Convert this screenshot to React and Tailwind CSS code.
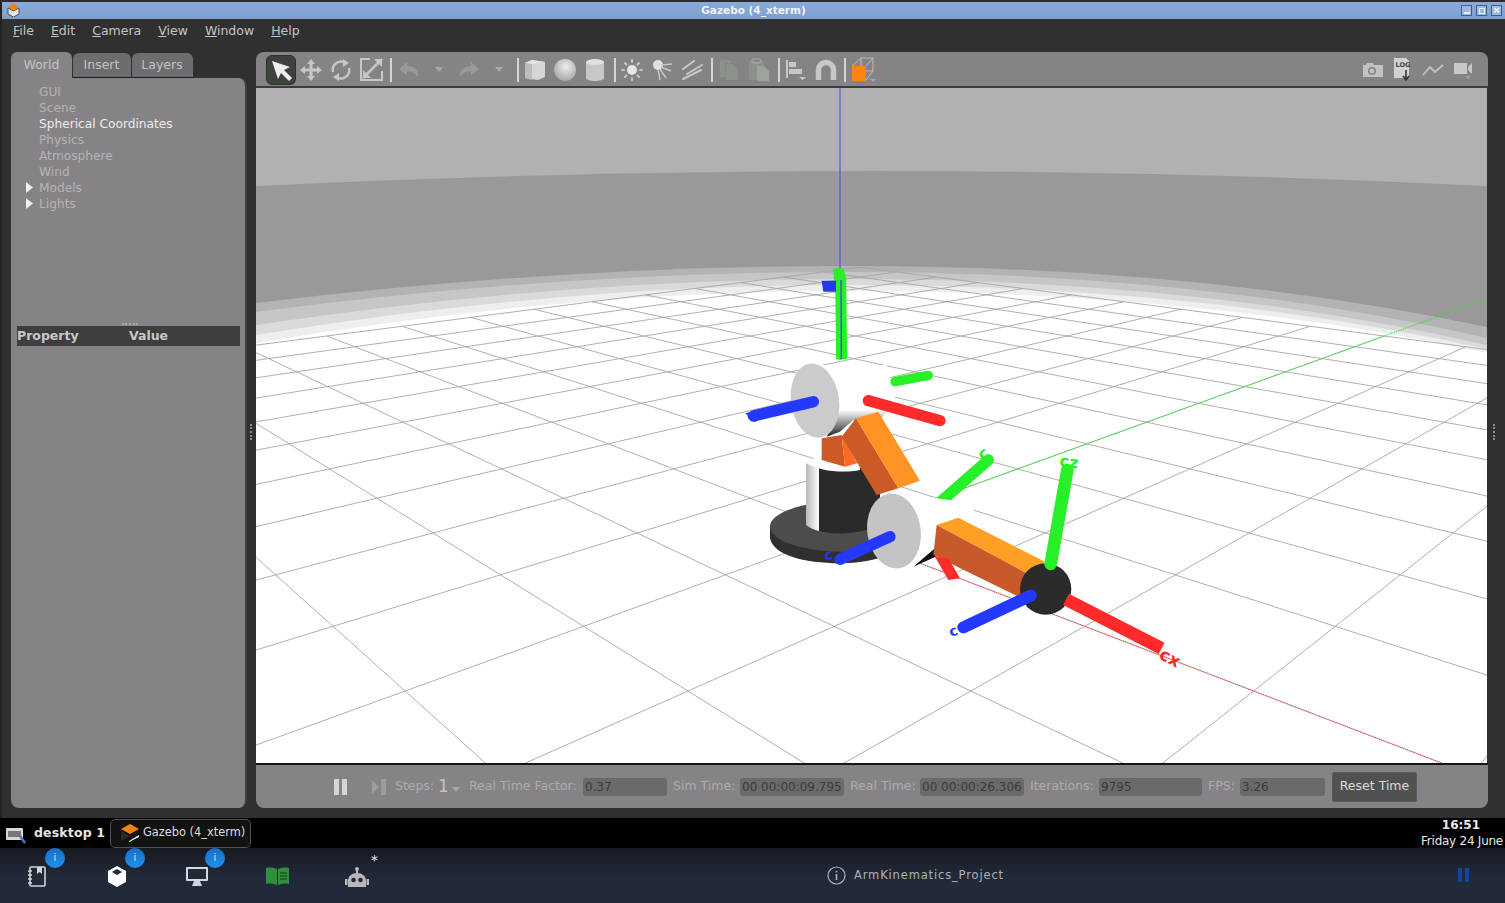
import React from "react"

// ground grid projection, fitted against the crossings in the viewport
const K = 0.0929
const project = (a, b) => {
    const w = 1 + (a + b) * K
    return [(a * K * -227 + b * K * 1969 + 841) / w, ((a + b) * K * 124 + 533) / w]
}
const near = (other) => Math.max(-10, (0.12 - 1) / K - other)

function gridLines() {
    const lines = []
    for (let i = -10; i <= 10; i++) {
        const [x1, y1] = project(i, near(i))
        const [x2, y2] = project(i, 10)
        const [x3, y3] = project(near(i), i)
        const [x4, y4] = project(10, i)
        lines.push([x1, y1, x2, y2], [x3, y3, x4, y4])
    }
    return lines
}

const horizonBands = [
    ["#9a989b", 300, 262, 320],
    ["#b4b2b5", 303, 266, 327],
    ["#c6c5c7", 312, 272, 338],
    ["#dbdadb", 325, 279, 345],
    ["#eeeeee", 335, 285, 349],
    ["#ffffff", 343, 291, 353],
]
const bandPath = (l, c, r) => `M256 ${l} Q560 ${c} 850 ${c} Q1200 ${c} 1487 ${r} V763 H256 Z`

function Scene() {
    const [rx, ry] = project(-10, 0)
    const [gx, gy] = project(0, 30)
    return (
        <svg viewBox="256 88 1231 675" className="block h-[675px] w-[1231px]">
            <defs>
                <linearGradient id="cyl" x1="0" x2="1" y1="0" y2="0">
                    <stop offset="0" stopColor="#b8b8b8" />
                    <stop offset="0.12" stopColor="#e8e8e8" />
                    <stop offset="0.17" stopColor="#ffffff" />
                    <stop offset="0.18" stopColor="#2a2a2a" />
                    <stop offset="1" stopColor="#2a2a2a" />
                </linearGradient>
                <linearGradient id="shade" x1="0" x2="0" y1="0" y2="1">
                    <stop offset="0" stopColor="#ffffff" />
                    <stop offset="1" stopColor="#222222" />
                </linearGradient>
            </defs>
            <rect x="256" y="88" width="1231" height="675" fill="#b2b0b3" />
            <path d="M256 186 Q871 156 1487 186 V763 H256 Z" fill="#9a989b" />
            {horizonBands.map(([fill, l, c, r]) => (
                <path key={fill} d={bandPath(l, c, r)} fill={fill} />
            ))}
            {gridLines().map((l, i) => (
                <line key={i} x1={l[0]} y1={l[1]} x2={l[2]} y2={l[3]} stroke="#a6a6a6" strokeWidth="0.9" />
            ))}
            <line x1="841" y1="533" x2={rx} y2={ry} stroke="#ff3030" strokeWidth="1" strokeDasharray="1 1" />
            <line x1="841" y1="533" x2={gx} y2={gy} stroke="#22ee22" strokeWidth="1" strokeDasharray="1.5 1" />
            <line x1="840" y1="88" x2="840" y2="360" stroke="#4a4ae0" strokeWidth="1" />

            {/* base and upper joint, traced in crop coordinates */}
            <g transform="translate(730 250) scale(0.3333)">
                <path d="M120 830 V865 C130 915 220 940 330 940 C440 940 540 900 560 850 V830 Z" fill="#2f312f" />
                <ellipse cx="335" cy="830" rx="215" ry="75" fill="#4c4d4b" />
                <path d="M228 640 C280 665 400 660 450 635 V820 C400 860 270 860 228 825 Z" fill="url(#cyl)" />
                <path d="M230 640 L275 610 L390 625 L390 660 C340 670 270 665 230 640 Z" fill="#ffffff" />
                <path d="M240 345 L470 345 L495 440 L480 490 L300 560 L250 560 Z" fill="#ffffff" />
                <path d="M330 480 L480 480 L440 515 L370 510 L330 545 L290 560 Z" fill="url(#shade)" />
                <polygon points="275,565 335,555 345,650 275,630" fill="#cc5a26" />
                <polygon points="335,555 382,640 345,650" fill="#ff6a20" />
                <polygon points="378,505 505,715 440,735 335,560" fill="#cc5a26" />
                <polygon points="378,505 445,485 570,692 505,715" fill="#ff9424" />
                <ellipse cx="255" cy="452" rx="72" ry="112" transform="rotate(-8 255 452)" fill="#cbcacc" />
                <line x1="332" y1="90" x2="335" y2="328" stroke="#28f028" strokeWidth="33" />
                <line x1="333" y1="90" x2="334" y2="328" stroke="#3b49e0" strokeWidth="4" />
                <polygon points="275,92 318,92 318,125 280,125" fill="#2438ee" />
                <polygon points="310,55 340,55 350,90 312,90" fill="#28f028" />
                <line x1="495" y1="395" x2="595" y2="376" stroke="#28f028" strokeWidth="28" strokeLinecap="round" />
                <line x1="415" y1="452" x2="630" y2="512" stroke="#ff2a2a" strokeWidth="34" strokeLinecap="round" />
                <line x1="70" y1="498" x2="250" y2="455" stroke="#2438ff" strokeWidth="34" strokeLinecap="round" />
                <polygon points="46,490 85,480 85,510 75,516" fill="#2438ff" />
                <line x1="632" y1="755" x2="775" y2="630" stroke="#28f028" strokeWidth="34" strokeLinecap="round" />
            </g>

            {/* forearm and end joint */}
            <g transform="translate(880 430) scale(0.3333)">
                <path d="M60 190 L280 220 L285 285 L170 290 L160 360 L100 412 L60 415 Z" fill="#ffffff" />
                <polygon points="100,410 165,355 172,378" fill="#111111" />
                <ellipse cx="42" cy="303" rx="80" ry="113" transform="rotate(-8 42 303)" fill="#c4c3c5" />
                <polygon points="170,285 235,263 495,395 450,435" fill="#ffa024" />
                <polygon points="170,285 450,435 425,505 160,375" fill="#c8592a" />
                <polygon points="165,380 205,385 240,445 205,450" fill="#ff2a2a" />
                <circle cx="497" cy="477" r="77" fill="#2b2b2b" />
                <line x1="512" y1="402" x2="562" y2="120" stroke="#28f028" strokeWidth="38" strokeLinecap="round" />
                <line x1="452" y1="497" x2="250" y2="592" stroke="#2438ff" strokeWidth="36" strokeLinecap="round" />
                <line x1="558" y1="508" x2="845" y2="655" stroke="#ff2a2a" strokeWidth="38" strokeLinecap="butt" />
                <line x1="30" y1="320" x2="-120" y2="388" stroke="#2438ff" strokeWidth="34" strokeLinecap="round" />
            </g>

            {/* joint frame labels */}
            <text x="1158" y="658" transform="rotate(28 1158 658)" fontSize="17" fontWeight="700" fill="#ff2a2a">cx</text>
            <text x="1059" y="466" transform="rotate(8 1059 466)" fontSize="16" fontWeight="700" fill="#28f028">cz</text>
            <text x="983" y="461" transform="rotate(-40 983 461)" fontSize="16" fontWeight="700" fill="#28f028">c</text>
            <text x="951" y="637" transform="rotate(-20 951 637)" fontSize="14" fontWeight="700" fill="#2438ff">c</text>
            <text x="826" y="561" transform="rotate(-20 826 561)" fontSize="14" fontWeight="700" fill="#2438ff">c</text>
        </svg>
    )
}

function Tool({ children, active }) {
    return (
        <div className={`flex h-[30px] w-[30px] shrink-0 items-center justify-center rounded-md ${active ? "border border-[#2e302e] bg-[#3d423d]" : ""}`}>
            {children}
        </div>
    )
}
const Sep = ({ margin = "ml-1 mr-[1px]" }) => <div className={`${margin} h-6 w-[2px] shrink-0 bg-[#d6d5d6]`} />
const Caret = () => (
    <svg width="8" height="5" viewBox="0 0 8 5"><path d="M0 0 H8 L4 5 Z" fill="#a8a7a8" /></svg>
)

function MainToolbar() {
    const light = "#c8c7c8"
    const dim = "#989b97"
    return (
        <div className="flex h-[36px] shrink-0 items-center rounded-t-lg border-b-2 border-[#3c3c3c] bg-[#858385] pl-[10px] pr-[10px] pt-[1px]">
            <Tool active>
                <svg width="24" height="24" viewBox="0 0 24 24"><path d="M3 3 L21 9 L15 12 L23 20 L20 23 L12 15 L9 21 Z" fill="#eeeeee" /></svg>
            </Tool>
            <Tool>
                <svg width="22" height="22" viewBox="0 0 22 22" fill={light}>
                    <path d="M11 0 L15 5 H12.5 V9.5 H17 V7 L22 11 L17 15 V12.5 H12.5 V17 H15 L11 22 L7 17 H9.5 V12.5 H5 V15 L0 11 L5 7 V9.5 H9.5 V5 H7 Z" />
                </svg>
            </Tool>
            <Tool>
                <svg width="22" height="22" viewBox="0 0 22 22" fill="none" stroke={light} strokeWidth="2.5">
                    <path d="M3 13 A8.5 8.5 0 0 1 16 4" />
                    <path d="M19 9 A8.5 8.5 0 0 1 6 18" />
                    <path d="M13 0 L19 4 L13 8 Z" fill={light} stroke="none" />
                    <path d="M9 22 L3 18 L9 14 Z" fill={light} stroke="none" />
                </svg>
            </Tool>
            <Tool>
                <svg width="23" height="23" viewBox="0 0 23 23" fill="none" stroke={light} strokeWidth="2">
                    <path d="M10 1 H1 V22 H22 V13" />
                    <path d="M22 1 V1 L3 20" strokeWidth="2.5" />
                    <path d="M14 1 H22 V9 Z" fill={light} stroke="none" />
                    <path d="M3 12 V20 H11 Z" fill={light} stroke="none" />
                </svg>
            </Tool>
            <Sep margin="ml-1 mr-[2px]" />
            <Tool>
                <svg width="22" height="18" viewBox="0 0 22 18"><path d="M9 1 L1 8 L9 14 V10.5 C14 10 18 12 20 17 C21 9 16 5 9 5 Z" fill={dim} /></svg>
            </Tool>
            <Tool><Caret /></Tool>
            <Tool>
                <svg width="22" height="18" viewBox="0 0 22 18"><path d="M13 1 L21 8 L13 14 V10.5 C8 10 4 12 2 17 C1 9 6 5 13 5 Z" fill={dim} /></svg>
            </Tool>
            <Tool><Caret /></Tool>
            <Sep margin="ml-[3px] mr-[1px]" />
            <Tool>
                <svg width="24" height="24" viewBox="0 0 24 24">
                    <polygon points="2,5 9,2 22,4 22,19 15,22 2,20" fill="#d6d5d6" />
                    <polygon points="2,5 9,2 22,4 9,6" fill="#e4e3e4" />
                    <polygon points="2,5 9,6 9,22 2,20" fill="#bcbbbc" />
                </svg>
            </Tool>
            <Tool>
                <svg width="24" height="24" viewBox="0 0 24 24">
                    <defs>
                        <radialGradient id="ball" cx="0.55" cy="0.35" r="0.7">
                            <stop offset="0" stopColor="#eeeeee" />
                            <stop offset="1" stopColor="#a2a1a2" />
                        </radialGradient>
                    </defs>
                    <circle cx="12" cy="12" r="11" fill="url(#ball)" />
                </svg>
            </Tool>
            <Tool>
                <svg width="20" height="24" viewBox="0 0 20 24">
                    <path d="M1 4 V20 C1 24 19 24 19 20 V4 Z" fill="#c8c7c8" />
                    <ellipse cx="10" cy="4" rx="9" ry="3" fill="#e2e1e2" />
                </svg>
            </Tool>
            <Sep />
            <Tool>
                <svg width="22" height="22" viewBox="0 0 22 22" stroke={light} strokeWidth="2" strokeLinecap="round">
                    <circle cx="11" cy="11" r="5" fill="#e6e6e6" stroke="none" />
                    <path d="M11 1 V3 M11 19 V21 M1 11 H3 M19 11 H21 M4 4 L5.5 5.5 M16.5 16.5 L18 18 M18 4 L16.5 5.5 M5.5 16.5 L4 18" />
                </svg>
            </Tool>
            <Tool>
                <svg width="22" height="22" viewBox="0 0 22 22" stroke={light} strokeWidth="1.5">
                    <circle cx="7" cy="6" r="5" fill="#e0e0e0" stroke="none" />
                    <path d="M10 6 L21 5 M10 8 L20 12 M9 10 L15 19 M7 10 L9 21" />
                </svg>
            </Tool>
            <Tool>
                <svg width="22" height="20" viewBox="0 0 22 20" stroke={light} strokeWidth="2" strokeLinecap="round">
                    <path d="M2 9 L13 1 M6 14 L21 5 M2 19 L20 10" />
                </svg>
            </Tool>
            <Sep />
            <Tool>
                <svg width="20" height="22" viewBox="0 0 20 22" fill="#8d918c">
                    <path d="M1 1 H10 L12 3 V4 H6 V18 H1 Z" />
                    <path d="M7 5 H14 L19 10 V21 H7 Z" />
                </svg>
            </Tool>
            <Tool>
                <svg width="22" height="24" viewBox="0 0 22 24">
                    <rect x="1" y="3" width="15" height="19" rx="1" fill="#8d918c" />
                    <rect x="4" y="1" width="9" height="4" rx="1" fill="none" stroke="#a8aaa7" />
                    <path d="M9 8 H16 L21 13 V23 H9 Z" fill="#9ea29d" />
                </svg>
            </Tool>
            <Sep />
            <Tool>
                <svg width="22" height="22" viewBox="0 0 22 22" fill={light}>
                    <rect x="1" y="1" width="2" height="18" />
                    <rect x="4" y="3" width="7" height="5" />
                    <rect x="4" y="10" width="13" height="5" />
                    <path d="M14 18 H21 L17.5 21 Z" />
                </svg>
            </Tool>
            <Tool>
                <svg width="22" height="22" viewBox="0 0 22 22" fill="none">
                    <path d="M3.5 21 V11 A7.5 7.5 0 0 1 18.5 11 V21" stroke={light} strokeWidth="5.5" />
                </svg>
            </Tool>
            <Sep margin="ml-[3px] mr-[1px]" />
            <Tool>
                <svg width="30" height="26" viewBox="0 0 30 26" fill="none" stroke="#bcbbbc" strokeWidth="1">
                    <path d="M5 9 L14 1 H26 V14 L19 23 M14 1 V14 H26 M19 9 L26 1 M14 14 L5 23" />
                    <rect x="5" y="9" width="14" height="15" fill="#ff8412" stroke="none" />
                    <path d="M23 22 H29 L26 25 Z" fill="#a8a7a8" stroke="none" />
                </svg>
            </Tool>

            <div className="ml-auto flex items-center">
                <Tool>
                    <svg width="22" height="16" viewBox="0 0 22 16">
                        <path d="M1 3 H4 L5 1 H11 L12 3 H21 V15 H1 Z" fill="#c4c3c4" />
                        <circle cx="10" cy="9" r="4" fill="#858385" />
                        <circle cx="10" cy="9" r="2.5" fill="#c4c3c4" />
                    </svg>
                </Tool>
                <Tool>
                    <svg width="20" height="26" viewBox="0 0 20 26">
                        <path d="M1 1 H13 L16 4 V21 H1 Z" fill="#d2d1d2" />
                        <text x="2.5" y="10" fontSize="6.5" fontWeight="700" fill="#444444">LOG</text>
                        <path d="M13 13 V22 M10 19 L13 23 L16 19" fill="none" stroke="#333333" strokeWidth="1.6" />
                    </svg>
                </Tool>
                <Tool>
                    <svg width="22" height="14" viewBox="0 0 22 14" fill="none" stroke="#c4c3c4" strokeWidth="1.8">
                        <path d="M1 12 L8 4 L13 9 L21 2" />
                    </svg>
                </Tool>
                <Tool>
                    <svg width="20" height="18" viewBox="0 0 20 18" fill="#c8c7c8">
                        <rect x="1" y="2" width="13" height="11" />
                        <path d="M15 6 L19 2 V13 L15 9 Z" />
                        <path d="M12 15 H18 L15 18 Z" fill="#a2a1a2" />
                    </svg>
                </Tool>
            </div>
        </div>
    )
}

function Field({ label, value, labelWidth, width }) {
    return (
        <>
            <span className={`ml-[6px] shrink-0 whitespace-nowrap text-[#adabad] ${labelWidth}`}>{label}</span>
            <div className={`flex h-[18px] shrink-0 items-center rounded-[3px] bg-[#6b6a6b] pl-[2px] text-[12px] text-[#3a3a3a] ${width}`}>{value}</div>
        </>
    )
}

function StatusBar() {
    return (
        <div className="flex h-[45px] shrink-0 items-center rounded-b-lg border-t-2 border-[#161616] bg-[#858385] text-[12.5px]">
            <svg width="13" height="16" viewBox="0 0 13 16" className="ml-[78px] shrink-0" fill="#d6d4d6">
                <rect x="0" y="0" width="5" height="16" />
                <rect x="8" y="0" width="5" height="16" />
            </svg>
            <svg width="14" height="16" viewBox="0 0 14 16" className="ml-[25px] shrink-0" fill="#9c9e9b">
                <path d="M0 1 L7 8 L0 15 Z" />
                <rect x="9" y="0" width="5" height="16" />
            </svg>
            <span className="ml-[9px] w-[43px] shrink-0 text-[#adabad]">Steps:</span>
            <span className="w-[13px] shrink-0 text-[17px] leading-none text-[#c4c2c4]">1</span>
            <span className="ml-[1px] mt-[6px] flex w-[11px] shrink-0"><Caret /></span>
            <Field label="Real Time Factor:" value="0.37" labelWidth="w-[114px]" width="w-[84px]" />
            <Field label="Sim Time:" value="00 00:00:09.795" labelWidth="w-[67px]" width="w-[104px]" />
            <Field label="Real Time:" value="00 00:00:26.306" labelWidth="w-[70px]" width="w-[104px]" />
            <Field label="Iterations:" value="9795" labelWidth="w-[69px]" width="w-[103px]" />
            <Field label="FPS:" value="3.26" labelWidth="w-[32px]" width="w-[85px]" />
            <button className="ml-[7px] h-[30px] w-[85px] shrink-0 rounded-[2px] border border-[#5c5c5c] bg-[#515151] text-[12.5px] text-[#dcdcdc]">Reset Time</button>
        </div>
    )
}

const treeItems = [
    ["GUI"],
    ["Scene"],
    ["Spherical Coordinates", "active"],
    ["Physics"],
    ["Atmosphere"],
    ["Wind"],
    ["Models", "arrow"],
    ["Lights", "arrow"],
]

function LeftPanel() {
    return (
        <div className="flex w-[236px] shrink-0 flex-col">
            <div className="flex h-[26px] shrink-0 items-end text-[12.5px] text-[#c4c2c4]">
                <div className="flex h-[26px] w-[61px] items-center justify-center rounded-t-md bg-[#858385] pt-[1px]">World</div>
                <div className="ml-[1px] flex h-[25px] w-[58px] items-center justify-center rounded-t-md border-b border-[#1c1c1c] bg-[#6e6c6e] pr-[1px] pt-[1px]">Insert</div>
                <div className="ml-[1px] flex h-[25px] w-[61px] items-center justify-center rounded-t-md border-b border-[#1c1c1c] bg-[#6e6c6e] pr-[1px] pt-[1px]">Layers</div>
            </div>
            <div className="flex flex-1 flex-col rounded-b-lg rounded-tr-lg border-r-2 border-[#3e3e3e] bg-[#858385] pt-[6px]">
                <div className="h-[242px] shrink-0 text-[12.2px] leading-[16px]">
                    {treeItems.map(([name, kind]) => (
                        <div key={name} className={`relative pl-[28px] ${kind === "active" ? "text-[#ececec]" : "text-[#b5b3b5]"}`}>
                            {kind === "arrow" && (
                                <svg width="7" height="11" viewBox="0 0 7 11" className="absolute left-[15px] top-[2px]"><path d="M0 0 L7 5.5 L0 11 Z" fill="#f0f0f0" /></svg>
                            )}
                            {name}
                        </div>
                    ))}
                </div>
                <div className="ml-[6px] mr-[5px] flex h-[20px] items-center bg-[#3e3e3e] text-[12.5px] font-bold text-[#c8c8c8]">
                    <span className="w-[112px]">Property</span>
                    <span>Value</span>
                </div>
            </div>
        </div>
    )
}

const menus = [
    ["F", "ile"],
    ["E", "dit"],
    ["C", "amera"],
    ["V", "iew"],
    ["W", "indow"],
    ["H", "elp"],
]

function WindowButton({ children }) {
    return (
        <div className="flex h-[11px] w-[11px] items-center justify-center border border-[#3c5f94] bg-[#9db9df]">{children}</div>
    )
}

function DockIcon({ badge, children }) {
    return (
        <div className="relative flex h-[40px] w-[40px] items-center justify-center">
            {children}
            {badge && (
                <div className="absolute left-[28px] top-[-8px] flex h-[20px] w-[20px] items-center justify-center rounded-full bg-gradient-to-b from-[#1a6fc4] to-[#1e90ea] text-[10px] leading-none text-[#cfe3f7]">i</div>
            )}
        </div>
    )
}

function Dock() {
    return (
        <div className="relative flex flex-1 items-center bg-gradient-to-b from-[#161a22] via-[#222938] to-[#222938] to-40% pl-[17px] pt-[1px]">
            <div className="flex gap-[40px]">
                <DockIcon badge>
                    <svg width="20" height="21" viewBox="0 0 20 21" fill="none" stroke="#d4d4d4" strokeWidth="1.6">
                        <rect x="3" y="1" width="15" height="19" rx="1" />
                        <path d="M1 5 H5 M1 9 H5 M1 13 H5 M1 17 H5" />
                        <path d="M10 1 V8 L12.5 6 L15 8 V1" fill="#d4d4d4" stroke="none" />
                    </svg>
                </DockIcon>
                <DockIcon badge>
                    <svg width="20" height="21" viewBox="0 0 20 21">
                        <path d="M10 0 L19 5 V16 L10 21 L1 16 V5 Z" fill="#ffffff" />
                        <path d="M10 3 L15 6 L10 9 L5 6 Z" fill="#222938" />
                    </svg>
                </DockIcon>
                <DockIcon badge>
                    <svg width="24" height="21" viewBox="0 0 24 21">
                        <rect x="1" y="1" width="22" height="14" rx="1" fill="#d8d8d8" />
                        <rect x="3" y="3" width="18" height="10" fill="#222938" />
                        <path d="M9 15 H15 L17 20 H7 Z" fill="#c8d4e4" />
                    </svg>
                </DockIcon>
                <DockIcon>
                    <svg width="23" height="18" viewBox="0 0 23 18">
                        <path d="M0 1 C4 0 8 1 11 2 V18 C8 17 4 16 0 17 Z" fill="#2f8f3f" />
                        <path d="M12 2 C15 1 19 0 23 1 V17 C19 16 15 17 12 18 Z" fill="#2f8f3f" />
                        <path d="M14 6 H21 M14 9 H21 M14 12 H21" stroke="#123a1c" strokeWidth="1.2" />
                    </svg>
                </DockIcon>
                <DockIcon>
                    <svg width="24" height="22" viewBox="0 0 24 22" className="relative top-[2px]">
                        <rect x="11" y="2" width="2" height="5" fill="#b8b8b8" />
                        <circle cx="12" cy="2" r="2" fill="#b8b8b8" />
                        <path d="M3 14 C3 9 7 6 12 6 C17 6 21 9 21 14 V20 H3 Z" fill="#b8b8b8" />
                        <rect x="0" y="12" width="2.5" height="6" fill="#b8b8b8" />
                        <rect x="21.5" y="12" width="2.5" height="6" fill="#b8b8b8" />
                        <circle cx="8.5" cy="13" r="2.3" fill="#222938" />
                        <circle cx="15.5" cy="13" r="2.3" fill="#222938" />
                    </svg>
                    <span className="absolute left-[34px] top-[-6px] text-[14px] text-[#e8e8e8]">*</span>
                </DockIcon>
            </div>
            <div className="absolute left-[827px] top-[18px] flex items-center gap-[8px] text-[11.5px] tracking-[0.85px] text-[#aeb2b8]">
                <svg width="19" height="19" viewBox="0 0 19 19" fill="none" stroke="#aeb2b8" strokeWidth="1.2">
                    <circle cx="9.5" cy="9.5" r="8.5" />
                    <path d="M9.5 8 V14 M9.5 5 V6.5" strokeWidth="1.6" />
                </svg>
                ArmKinematics_Project
            </div>
            <svg width="12" height="14" viewBox="0 0 12 14" className="absolute left-[1458px] top-[20px]" fill="#0d47a1">
                <rect x="0" y="0" width="4" height="14" />
                <rect x="7" y="0" width="4" height="14" />
            </svg>
        </div>
    )
}

export default function App() {
    return (
        <div className="flex h-screen w-full flex-col overflow-hidden bg-[#303030] font-['DejaVu_Sans',sans-serif]">
            {/* window title */}
            <div className="h-[2px] shrink-0 bg-[#2b2b30]" />
            <div className="relative flex h-[17px] shrink-0 items-center justify-center border-l-2 border-[#222222] bg-gradient-to-b from-[#88abdc] to-[#7d9fcb] text-[10.5px] font-bold text-[#f0f4fa]">
                <svg width="13" height="14" viewBox="0 0 13 14" className="absolute left-[5px] top-[1px]">
                    <path d="M1 5 L6.5 8 L12 5 V11 L6.5 14 L1 11 Z" fill="#e8e8e8" stroke="#333333" strokeWidth="0.8" />
                    <path d="M6.5 0 L12 4 L6.5 7.5 L1 4 Z" fill="#f07f1c" />
                </svg>
                Gazebo (4_xterm)
                <div className="absolute right-[3px] top-[3px] flex gap-[4px]">
                    <WindowButton><div className="mt-[5px] h-[2px] w-[6px] bg-[#e8eef8]" /></WindowButton>
                    <WindowButton><div className="h-[6px] w-[6px] border border-[#e8eef8]" /></WindowButton>
                    <WindowButton><span className="text-[9px] leading-none text-white">×</span></WindowButton>
                </div>
            </div>

            {/* menu bar */}
            <div className="flex h-[25px] shrink-0 items-center gap-[17px] border-l-2 border-[#222222] pl-[11px] text-[12.5px] text-[#c4c4c4]">
                {menus.map(([first, rest]) => (
                    <span key={first}><span className="underline">{first}</span>{rest}</span>
                ))}
            </div>

            {/* panels */}
            <div className="relative flex h-[774px] shrink-0 gap-[9px] border-l-2 border-[#222222] pb-[10px] pl-[9px] pt-2">
                <LeftPanel />
                <div className="flex w-[1232px] shrink-0 flex-col">
                    <MainToolbar />
                    <Scene />
                    <StatusBar />
                </div>
                <div className="absolute left-[248px] top-[380px] h-[16px] w-[2px] border-l-2 border-dotted border-[#8a8a8a]" />
                <div className="absolute left-[1491px] top-[380px] h-[16px] w-[2px] border-l-2 border-dotted border-[#8a8a8a]" />
                <div className="absolute left-[120px] top-[279px] h-[2px] w-[16px] border-t-2 border-dotted border-[#a8a8a8]" />
            </div>

            {/* desktop task bar */}
            <div className="relative flex h-[30px] shrink-0 items-center bg-black">
                <svg width="22" height="18" viewBox="0 0 22 18" className="ml-[5px] mt-[3px] shrink-0">
                    <rect x="1" y="2" width="17" height="12" rx="1" fill="#d8d8d8" />
                    <rect x="3" y="5" width="13" height="6" fill="#777777" />
                    <path d="M15 10 L20 17" stroke="#4a78c0" strokeWidth="2.5" />
                </svg>
                <span className="ml-[7px] w-[70px] whitespace-nowrap text-[12.5px] font-bold tracking-[0.15px] text-[#e6e6e6]">desktop 1</span>
                <div className="ml-[6px] flex h-[29px] w-[141px] items-center rounded-[5px] border border-[#505250] bg-[#111311] pl-[8px] text-[11.4px] text-[#dcdcdc]">
                    <svg width="22" height="20" viewBox="0 0 22 20" className="shrink-0">
                        <path d="M11 1 L20 6 L11 11 L2 6 Z" fill="#f5820f" />
                        <path d="M2 8 L11 13 L2 18 Z" fill="#2a2a2a" />
                        <path d="M10 18 L20 12 V14 L10 19 Z" fill="#f2f2f2" />
                    </svg>
                    <span className="ml-[2px] whitespace-nowrap">Gazebo (4_xterm)</span>
                </div>
                <div className="absolute right-[2px] top-0 flex flex-col items-end text-[#e8e8e8]">
                    <span className="mr-[23px] text-[12px] font-bold leading-[15px]">16:51</span>
                    <span className="mt-[1px] text-[12px] leading-[15px] tracking-[-0.25px]">Friday 24 June</span>
                </div>
            </div>

            <Dock />
        </div>
    )
}
